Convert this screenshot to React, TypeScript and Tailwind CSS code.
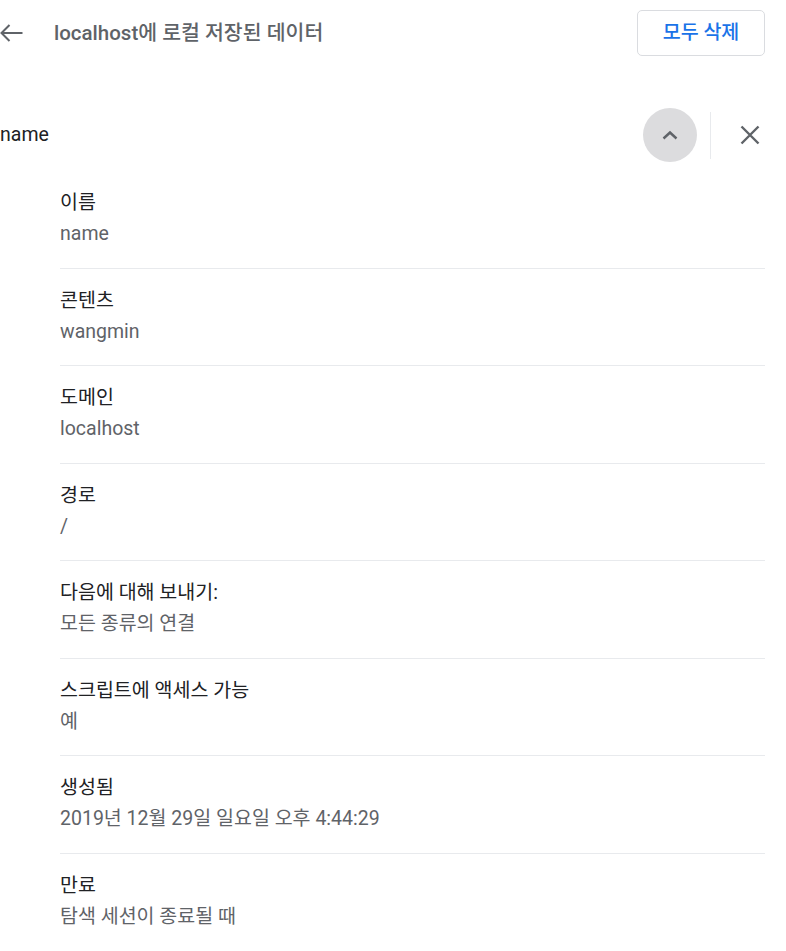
import React from "react";

const rows: [string, string][] = [
  ["이름", "name"],
  ["콘텐츠", "wangmin"],
  ["도메인", "localhost"],
  ["경로", "/"],
  ["다음에 대해 보내기:", "모든 종류의 연결"],
  ["스크립트에 액세스 가능", "예"],
  ["생성됨", "2019년 12월 29일 일요일 오후 4:44:29"],
  ["만료", "탐색 세션이 종료될 때"],
];

export default function App() {
  return (
    <div
      className="w-[786px] h-[951px] overflow-hidden bg-white pr-[21px]"
      style={{ fontFamily: "Roboto, 'Noto Sans CJK KR', sans-serif" }}
    >
      {/* header */}
      <div className="flex items-center h-[66px] py-[10px]">
        <svg width="24" height="18" viewBox="0 0 24 18" className="shrink-0" fill="none" stroke="#5f6368" strokeWidth="2">
          <path d="M1.5 9H22.5" />
          <path d="M9.5 1L1.5 9L9.5 17" />
        </svg>
        <div className="ml-[30px] flex-1 text-[20.5px] font-medium text-[#5f6368]">localhost에 로컬 저장된 데이터</div>
        <button className="w-[128px] h-[46px] border border-[#dadce0] rounded-[5px] text-[#1a73e8] text-[19.5px] font-medium">
          모두 삭제
        </button>
      </div>

      {/* name row */}
      <div className="flex items-center mt-[42px] h-[54px]">
        <div className="flex-1 text-[19.5px] text-[#202124]">name</div>
        <div className="w-[54px] h-[54px] rounded-full bg-[#dcdcde] flex items-center justify-center">
          <svg width="18" height="12" viewBox="0 0 18 12" fill="none" stroke="#5f6368" strokeWidth="2.4">
            <path d="M2.5 9.5L9 3.5L15.5 9.5" />
          </svg>
        </div>
        <div className="ml-[13px] w-px h-[47px] bg-[#e8eaed]" />
        <div className="ml-[24px] w-[30px] flex items-center justify-center">
          <svg width="20" height="20" viewBox="0 0 20 20" fill="none" stroke="#5f6368" strokeWidth="2.4">
            <path d="M1.5 1.5L18.5 18.5M18.5 1.5L1.5 18.5" />
          </svg>
        </div>
      </div>

      {/* detail rows */}
      <div className="ml-[60px] mt-[9px]">
        {rows.map(([label, value], i) => (
          <div
            key={label}
            className={`pt-[18px] pb-[19.5px] ${i < rows.length - 1 ? "border-b border-[#e8eaed]" : ""}`}
          >
            <div className="text-[19.5px] leading-[28px] text-[#202124]">{label}</div>
            <div className="mt-[3px] text-[19.5px] leading-[28px] text-[#5f6368]">{value}</div>
          </div>
        ))}
      </div>
    </div>
  );
}
